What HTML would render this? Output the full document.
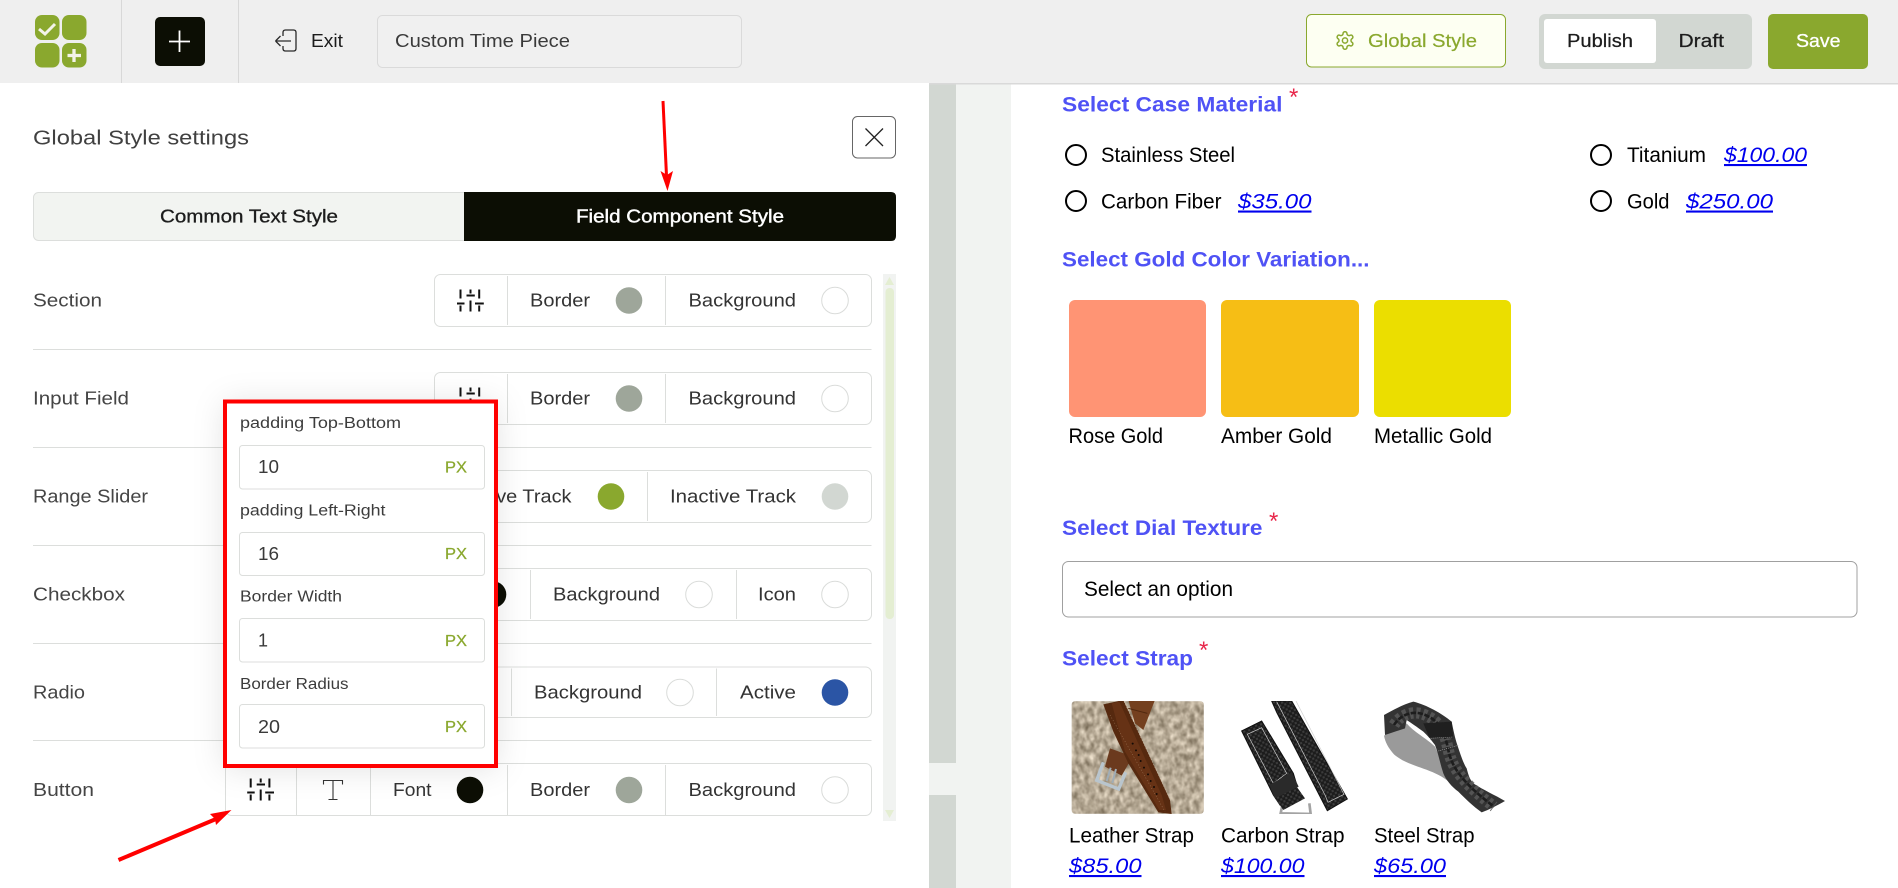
<!DOCTYPE html>
<html lang="en"><head><meta charset="utf-8"><title>Custom Time Piece - Global Style settings</title>
<style>
html,body{margin:0;padding:0;background:#fff;width:1898px;height:888px;overflow:hidden}
svg{display:block}
text{font-family:"Liberation Sans",sans-serif;white-space:pre}
.h{font-size:18px;fill:#1c1c1c}
.l{font-size:18px;fill:#454545}
.c{font-size:18px;fill:#333}
.p{font-size:15.5px;fill:#3c3c3c}
.v{font-size:18px;fill:#3a3a3a}
.x{font-size:16px;fill:#8aa82e;font-weight:400;stroke:#8aa82e;stroke-width:.25}
.q{font-size:21px;font-weight:700;fill:#4f52f5}
.f{font-size:21px;fill:#000}
.m{font-size:21px;fill:#0000ee;font-style:italic;text-decoration:underline}
.s{font-size:24px;fill:#e8274b}
.ctl{fill:#fff;stroke:#dcdedc;stroke-width:1}
.dv{stroke:#dcdedc;stroke-width:1}
.hr{stroke:#dcdedc;stroke-width:1}
.in{fill:#fff;stroke:#dcdedc;stroke-width:1}
.em{fill:#fff;stroke:#dadcda;stroke-width:1}
</style></head><body>
<svg xmlns="http://www.w3.org/2000/svg" width="1898" height="888" viewBox="0 0 1898 888">
<defs>
<g id="sl" fill="none" stroke="#111" stroke-width="2">
<path d="M-10 -11V-2M-10 5V11M0 -11V-7M0 0V11M8.700 -11V-2M8.700 5V11"/>
<path d="M-13.500 3H-6M-4 -5H4.300M4.500 3H13.300"/>
</g>
<filter id="nz" x="0" y="0" width="100%" height="100%" color-interpolation-filters="sRGB">
<feTurbulence type="fractalNoise" baseFrequency=".2 .13" numOctaves="3" seed="7"/>
<feColorMatrix values=".65 0 0 0 .385  .65 0 0 0 .335  .65 0 0 0 .255  0 0 0 0 1"/>
<feGaussianBlur stdDeviation=".5"/>
</filter>
<filter id="shd" x="-30%" y="-20%" width="160%" height="140%"><feDropShadow dx="0" dy="2" stdDeviation="16" flood-color="#000" flood-opacity=".12"/></filter>
<clipPath id="clipL"><rect x="1071.500" y="701" width="132.500" height="113" rx="4"/></clipPath>
<clipPath id="clipC"><rect x="1225" y="701" width="140" height="113"/></clipPath>
<pattern id="cb" width="11" height="11" patternUnits="userSpaceOnUse" patternTransform="rotate(30)">
<rect width="11" height="11" fill="#1c1c1c"/><path d="M5.500 1L10 5.500 5.500 10 1 5.500Z" fill="#3c3c3c"/>
</pattern>
</defs>

<!-- canvas / right background -->
<rect x="929" y="83" width="27" height="805" fill="#d2d7d2"/>
<rect x="929" y="763" width="27" height="32" fill="#f1f3f1"/>
<rect x="956" y="83" width="55" height="805" fill="#f1f3f1"/>

<!-- header -->
<rect width="1898" height="83" fill="#efefef"/>
<rect x="929" y="83" width="969" height="1.500" fill="#d9d9d9"/>
<rect x="121" y="0" width="1" height="83" fill="#d8d8d8"/>
<rect x="238" y="0" width="1" height="83" fill="#d8d8d8"/>
<g fill="#8aa82e"><rect x="35" y="15" width="24.500" height="25" rx="7"/><rect x="62" y="15" width="24.500" height="25" rx="7"/><rect x="35" y="43" width="24.500" height="24.500" rx="7"/><rect x="62" y="43" width="24.500" height="24.500" rx="7"/></g>
<path d="M39 29L45 34 55 24" fill="none" stroke="#f3f3e8" stroke-width="3"/>
<path d="M74 49V62M67.500 55.500H81" fill="none" stroke="#f3f3e8" stroke-width="3.300"/>
<rect x="155" y="17" width="50" height="49" rx="5" fill="#0c0e04"/>
<path d="M179.500 30.500V52M169 41.500H190" stroke="#fff" stroke-width="1.800" fill="none"/>
<path d="M283 36V32.500Q283 30 285.500 30H293.500Q296 30 296 32.500V48.500Q296 51 293.500 51H285.500Q283 51 283 48.500V46M275.500 41H291M275.500 41L280.500 36M275.500 41L280.500 46" fill="none" stroke="#2a2a2a" stroke-width="1.300"/>
<text class="h" x="311" y="47" textLength="32" lengthAdjust="spacingAndGlyphs">Exit</text>
<rect x="377.500" y="15.500" width="364" height="52" rx="5" fill="#f0f0f0" stroke="#dadada" stroke-width="1"/>
<text class="h" x="395" y="47" textLength="175" lengthAdjust="spacingAndGlyphs" style="fill:#3a3a3a">Custom Time Piece</text>

<rect x="1306.500" y="14.500" width="199" height="52.500" rx="5" fill="#fdfff2" stroke="#8aa82e" stroke-width="1"/>
<g transform="translate(1334.500,30) scale(.875)" fill="none" stroke="#8aa82e" stroke-width="1.700"><path d="M12.220 2h-.44a2 2 0 0 0-2 2v.18a2 2 0 0 1-1 1.730l-.43.25a2 2 0 0 1-2 0l-.15-.08a2 2 0 0 0-2.730.73l-.22.38a2 2 0 0 0 .73 2.730l.15.1a2 2 0 0 1 1 1.720v.51a2 2 0 0 1-1 1.740l-.15.09a2 2 0 0 0-.73 2.730l.22.38a2 2 0 0 0 2.730.73l.15-.08a2 2 0 0 1 2 0l.43.25a2 2 0 0 1 1 1.730V20a2 2 0 0 0 2 2h.44a2 2 0 0 0 2-2v-.18a2 2 0 0 1 1-1.730l.43-.25a2 2 0 0 1 2 0l.15.08a2 2 0 0 0 2.730-.73l.22-.39a2 2 0 0 0-.73-2.730l-.15-.08a2 2 0 0 1-1-1.740v-.5a2 2 0 0 1 1-1.740l.15-.09a2 2 0 0 0 .73-2.730l-.22-.38a2 2 0 0 0-2.730-.73l-.15.08a2 2 0 0 1-2 0l-.43-.25a2 2 0 0 1-1-1.730V4a2 2 0 0 0-2-2z"/><circle cx="12" cy="12" r="3"/></g>
<text class="h" x="1368" y="47" textLength="109" lengthAdjust="spacingAndGlyphs" style="fill:#8aa82e;stroke:#8aa82e;stroke-width:.2">Global Style</text>
<rect x="1539" y="14" width="213" height="55" rx="6" fill="#d2d7d2"/>
<rect x="1544" y="19" width="112" height="44" rx="3" fill="#fff"/>
<text class="h" x="1567" y="47" textLength="66" lengthAdjust="spacingAndGlyphs" style="stroke:#1c1c1c;stroke-width:.25">Publish</text>
<text class="h" x="1678.500" y="47" textLength="45.500" lengthAdjust="spacingAndGlyphs" style="stroke:#1c1c1c;stroke-width:.25">Draft</text>
<rect x="1768" y="14" width="100" height="55" rx="5" fill="#8aa82e"/>
<text class="h" x="1796" y="47" textLength="44.500" lengthAdjust="spacingAndGlyphs" style="fill:#fff;stroke:#fff;stroke-width:.3">Save</text>

<!-- left panel -->
<text x="33" y="144.500" textLength="216" lengthAdjust="spacingAndGlyphs" style="font-size:20.500px;fill:#404040">Global Style settings</text>
<rect x="852.500" y="116.500" width="43" height="41.500" rx="5" fill="#fff" stroke="#666" stroke-width="1"/>
<path d="M865.500 128.500L883 146M883 128.500L865.500 146" stroke="#222" stroke-width="1.300" fill="none"/>
<rect x="33.500" y="192.500" width="862" height="48" rx="5" fill="#f2f4f1" stroke="#dcdedc" stroke-width="1"/>
<path d="M464 192H891Q896 192 896 197V236Q896 241 891 241H464Z" fill="#0c0e04"/>
<text class="h" x="160" y="222.500" textLength="178" lengthAdjust="spacingAndGlyphs" style="stroke:#1c1c1c;stroke-width:.3">Common Text Style</text>
<text class="h" x="576" y="222.500" textLength="208" lengthAdjust="spacingAndGlyphs" style="fill:#fff;stroke:#fff;stroke-width:.4">Field Component Style</text>

<!-- scrollbar -->
<rect x="883" y="274" width="13" height="547" fill="#f1f3f1"/>
<rect x="885.500" y="288" width="8.500" height="331" rx="4" fill="#e4eed2"/>
<path d="M889.500 277L894 285H885Z" fill="#e4eed2"/><path d="M889.500 818L894 810H885Z" fill="#e4eed2"/>

<!-- row labels -->
<text class="l" x="33" y="306.500" textLength="69" lengthAdjust="spacingAndGlyphs">Section</text>
<text class="l" x="33" y="404.500" textLength="96" lengthAdjust="spacingAndGlyphs">Input Field</text>
<text class="l" x="33" y="502.500" textLength="115" lengthAdjust="spacingAndGlyphs">Range Slider</text>
<text class="l" x="33" y="600.500" textLength="92" lengthAdjust="spacingAndGlyphs">Checkbox</text>
<text class="l" x="33" y="698.500" textLength="52" lengthAdjust="spacingAndGlyphs">Radio</text>
<text class="l" x="33" y="796" textLength="61" lengthAdjust="spacingAndGlyphs">Button</text>
<g class="hr"><path d="M33 349.500H871.500M33 447.500H871.500M33 545.500H871.500M33 643.500H871.500M33 740.500H871.500"/></g>

<!-- row 1 -->
<rect class="ctl" x="434.500" y="274.500" width="437" height="52" rx="6"/>
<path class="dv" d="M507.500 276V325M665.500 276V325"/>
<use href="#sl" x="470.500" y="300.500"/>
<text class="c" x="530" y="306.500" textLength="60" lengthAdjust="spacingAndGlyphs">Border</text>
<circle cx="629" cy="300.500" r="13.300" fill="#9ea69a"/>
<text class="c" x="688.500" y="306.500" textLength="107.500" lengthAdjust="spacingAndGlyphs">Background</text>
<circle class="em" cx="835" cy="300.500" r="13.300"/>

<!-- row 2 -->
<rect class="ctl" x="434.500" y="372.500" width="437" height="52" rx="6"/>
<path class="dv" d="M507.500 374V423M665.500 374V423"/>
<use href="#sl" x="470.500" y="398.500"/>
<text class="c" x="530" y="404.500" textLength="60" lengthAdjust="spacingAndGlyphs">Border</text>
<circle cx="629" cy="398.500" r="13.300" fill="#9ea69a"/>
<text class="c" x="688.500" y="404.500" textLength="107.500" lengthAdjust="spacingAndGlyphs">Background</text>
<circle class="em" cx="835" cy="398.500" r="13.300"/>

<!-- row 3 -->
<rect class="ctl" x="400" y="470.500" width="471.500" height="52" rx="6"/>
<path class="dv" d="M647.500 472V521"/>
<text class="c" x="463" y="502.500" textLength="108.500" lengthAdjust="spacingAndGlyphs">Active Track</text>
<circle cx="611" cy="496.500" r="13.300" fill="#8aa82e"/>
<text class="c" x="670" y="502.500" textLength="126" lengthAdjust="spacingAndGlyphs">Inactive Track</text>
<circle cx="835" cy="496.500" r="13.300" fill="#d2d7d2"/>

<!-- row 4 -->
<rect class="ctl" x="400" y="568.500" width="471.500" height="52" rx="6"/>
<path class="dv" d="M530.500 570V619M736.500 570V619"/>
<circle cx="493" cy="594.500" r="13.300" fill="#0c0e04"/>
<text class="c" x="553" y="600.500" textLength="107" lengthAdjust="spacingAndGlyphs">Background</text>
<circle class="em" cx="699" cy="594.500" r="13.300"/>
<text class="c" x="758" y="600.500" textLength="38" lengthAdjust="spacingAndGlyphs">Icon</text>
<circle class="em" cx="835" cy="594.500" r="13.300"/>

<!-- row 5 -->
<rect class="ctl" x="400" y="667" width="471.500" height="50.500" rx="6"/>
<path class="dv" d="M511.500 668.500V716M716.500 668.500V716"/>
<text class="c" x="534" y="698.500" textLength="108" lengthAdjust="spacingAndGlyphs">Background</text>
<circle class="em" cx="680" cy="692.500" r="13.300"/>
<text class="c" x="740" y="698.500" textLength="56" lengthAdjust="spacingAndGlyphs">Active</text>
<circle cx="835" cy="692.500" r="13.300" fill="#2b55a5"/>

<!-- row 6 -->
<rect class="ctl" x="225.500" y="763.500" width="646" height="52" rx="6"/>
<path class="dv" d="M296.500 765V815M370.500 765V815M507.500 765V815M665.500 765V815"/>
<use href="#sl" x="260.700" y="789.500"/>
<path d="M323.500 784.500V780.500H342.500V784.500M333 780.500V799.500M328.500 799.500H337.500" fill="none" stroke="#333" stroke-width="1.100"/>
<text class="c" x="393" y="796" textLength="38.500" lengthAdjust="spacingAndGlyphs">Font</text>
<circle cx="470" cy="790" r="13.300" fill="#0c0e04"/>
<text class="c" x="530" y="796" textLength="60" lengthAdjust="spacingAndGlyphs">Border</text>
<circle cx="629" cy="790" r="13.300" fill="#9ea69a"/>
<text class="c" x="688.500" y="796" textLength="107.500" lengthAdjust="spacingAndGlyphs">Background</text>
<circle class="em" cx="835" cy="790" r="13.300"/>

<!-- popup -->
<rect x="225" y="401.500" width="271" height="364.500" fill="#fff" filter="url(#shd)"/>
<rect x="225" y="401.500" width="271" height="364.500" fill="#fff" stroke="#ff0000" stroke-width="4"/>
<text class="p" x="240" y="428" textLength="161" lengthAdjust="spacingAndGlyphs">padding Top-Bottom</text>
<rect class="in" x="239.500" y="445.500" width="245" height="43.500" rx="3"/>
<text class="v" x="258" y="473" textLength="21" lengthAdjust="spacingAndGlyphs">10</text>
<text class="x" x="445" y="472.500" textLength="22" lengthAdjust="spacingAndGlyphs">PX</text>
<text class="p" x="240" y="515.500" textLength="145.500" lengthAdjust="spacingAndGlyphs">padding Left-Right</text>
<rect class="in" x="239.500" y="532.500" width="245" height="43" rx="3"/>
<text class="v" x="258" y="560" textLength="21" lengthAdjust="spacingAndGlyphs">16</text>
<text class="x" x="445" y="559" textLength="22" lengthAdjust="spacingAndGlyphs">PX</text>
<text class="p" x="240" y="601.500" textLength="102" lengthAdjust="spacingAndGlyphs">Border Width</text>
<rect class="in" x="239.500" y="618.500" width="245" height="43.500" rx="3"/>
<text class="v" x="258" y="646.500">1</text>
<text class="x" x="445" y="646" textLength="22" lengthAdjust="spacingAndGlyphs">PX</text>
<text class="p" x="240" y="689" textLength="108.500" lengthAdjust="spacingAndGlyphs">Border Radius</text>
<rect class="in" x="239.500" y="704.500" width="245" height="43.500" rx="3"/>
<text class="v" x="258" y="733" textLength="22" lengthAdjust="spacingAndGlyphs">20</text>
<text class="x" x="445" y="732" textLength="22" lengthAdjust="spacingAndGlyphs">PX</text>

<!-- annotation arrows -->
<path d="M663 101L666.500 176" stroke="#ff0000" stroke-width="3" fill="none"/>
<path d="M660.500 171L667 175 673 171 667.500 191Z" fill="#ff0000"/>
<path d="M118.500 860L216 819" stroke="#ff0000" stroke-width="4" fill="none"/>
<path d="M231.500 810L210 814 215 819 216 825Z" fill="#ff0000"/>

<!-- form -->
<text class="q" x="1062" y="111.500" textLength="220.500" lengthAdjust="spacingAndGlyphs">Select Case Material</text>
<text class="s" x="1289" y="105">*</text>
<g fill="none" stroke="#000" stroke-width="2"><circle cx="1076" cy="155" r="10"/><circle cx="1076" cy="201" r="10"/><circle cx="1601" cy="155" r="10"/><circle cx="1601" cy="201" r="10"/></g>
<text class="f" x="1101" y="162" textLength="134" lengthAdjust="spacingAndGlyphs">Stainless Steel</text>
<text class="f" x="1627" y="162" textLength="79" lengthAdjust="spacingAndGlyphs">Titanium</text>
<text class="m" x="1724" y="162" textLength="83" lengthAdjust="spacingAndGlyphs">$100.00</text>
<text class="f" x="1101" y="208.500" textLength="120.500" lengthAdjust="spacingAndGlyphs">Carbon Fiber</text>
<text class="m" x="1238" y="208.500" textLength="73.500" lengthAdjust="spacingAndGlyphs">$35.00</text>
<text class="f" x="1627" y="208.500" textLength="42.500" lengthAdjust="spacingAndGlyphs">Gold</text>
<text class="m" x="1686" y="208.500" textLength="87" lengthAdjust="spacingAndGlyphs">$250.00</text>
<text class="q" x="1062" y="266.500" textLength="307.500" lengthAdjust="spacingAndGlyphs">Select Gold Color Variation...</text>

<rect x="1069" y="300" width="137" height="117" rx="6" fill="#ff9474"/>
<rect x="1221" y="300" width="138" height="117" rx="6" fill="#f6be15"/>
<rect x="1374" y="300" width="137" height="117" rx="6" fill="#ebde00"/>
<text class="f" x="1068.500" y="443" textLength="94.500" lengthAdjust="spacingAndGlyphs">Rose Gold</text>
<text class="f" x="1221" y="443" textLength="111" lengthAdjust="spacingAndGlyphs">Amber Gold</text>
<text class="f" x="1374" y="443" textLength="118" lengthAdjust="spacingAndGlyphs">Metallic Gold</text>

<text class="q" x="1062" y="535" textLength="200.500" lengthAdjust="spacingAndGlyphs">Select Dial Texture</text>
<text class="s" x="1269" y="529">*</text>
<rect x="1062.500" y="561.500" width="794.500" height="55.500" rx="6" fill="#fff" stroke="#a0a0a0" stroke-width="1"/>
<text class="f" x="1084" y="596" textLength="149" lengthAdjust="spacingAndGlyphs">Select an option</text>

<text class="q" x="1062" y="665.500" textLength="131" lengthAdjust="spacingAndGlyphs">Select Strap</text>
<text class="s" x="1199" y="658">*</text>

<!-- leather strap image -->
<g clip-path="url(#clipL)">
<rect x="1071.500" y="701" width="132.500" height="113" filter="url(#nz)"/>
<g transform="translate(1060,695) scale(.33333)">
<path d="M205 15H285L250 105 225 85Z" fill="#74401f"/>
<path d="M205 40L262 55" stroke="#52290f" stroke-width="3"/>
<path d="M150 160L200 178 212 195 185 242 135 215Z" fill="#6b3a1e"/>
<path d="M130 28L190 15 330 315 335 357 295 352 205 205 160 110Z" fill="#56290f"/>
<path d="M155 25L178 20 305 300 318 345 298 345 195 170Z" fill="#6a3517" opacity=".8"/>
<path d="M192 20L332 318" stroke="#c9b9a3" stroke-width="1.500" stroke-dasharray="4 5" fill="none"/>
<path d="M150 60L315 350" stroke="#b79878" stroke-width="1.300" stroke-dasharray="3 6" fill="none"/>
<g fill="#140b06"><circle cx="218" cy="146" r="3"/><circle cx="228" cy="166" r="3"/><circle cx="236" cy="180" r="3"/><circle cx="242" cy="198" r="3"/><circle cx="252" cy="218" r="3"/><circle cx="264" cy="238" r="3"/><circle cx="272" cy="258" r="3"/><circle cx="282" cy="276" r="3"/><circle cx="290" cy="297" r="3"/></g>
<path d="M130 202L110 256 176 282 197 232" fill="none" stroke="#b9c5cd" stroke-width="10"/>
<path d="M152 218L140 258M168 222L157 264" stroke="#a0adb6" stroke-width="6" fill="none"/>
</g></g>

<!-- carbon strap image -->
<g clip-path="url(#clipC)"><g transform="translate(1060,695) scale(.33333)">
<path d="M668 325L662 355 752 357 748 325" fill="none" stroke="#a3a3a3" stroke-width="8"/>
<path d="M635 18H695L862 312 802 347 650 52Z" fill="url(#cb)" stroke="#0f0f0f" stroke-width="3"/>
<path d="M650 20L795 300 804 322 852 298 708 18" fill="none" stroke="#d0d0d0" stroke-width="2"/>
<path d="M545 108L605 78 700 235 712 275 660 330 640 300Z" fill="url(#cb)" stroke="#0f0f0f" stroke-width="3"/>
<path d="M562 118L605 98 680 235 640 265Z" fill="none" stroke="#d0d0d0" stroke-width="2"/>
<path d="M628 270L695 232 716 275 645 310Z" fill="#2a2a2a"/>
<path d="M645 310L712 278 735 310 670 345Z" fill="url(#cb)"/>
</g></g>

<!-- steel strap image -->
<g transform="translate(1370,695) scale(.33333)">
<path d="M42 122C60 112 90 100 110 85C130 110 170 130 195 155L245 268C195 218 120 220 72 178 55 160 45 140 42 122Z" fill="#9a9a9a"/>
<path d="M42 60C70 45 100 28 130 20C170 30 215 55 245 80 250 105 255 130 262 150 272 180 280 205 290 220 295 240 300 255 310 265 340 285 375 300 405 318 380 332 358 344 335 352 310 335 285 310 265 290 245 275 228 255 220 235 210 205 205 175 195 150 180 130 170 120 160 110 140 95 125 85 110 75L105 100 45 120Z" fill="#333"/>
<path d="M72 90C90 60 130 42 170 62 215 82 225 120 235 165 245 215 275 262 372 335" fill="none" stroke="#5a5a5a" stroke-width="34" stroke-dasharray="11 9" opacity=".85"/>
<path d="M72 90C90 60 130 42 170 62 215 82 225 120 235 165 245 215 275 262 372 335" fill="none" stroke="#1d1d1d" stroke-width="8" stroke-dasharray="16 5"/>
<path d="M160 85L245 80 250 130 178 128Z" fill="#1f1f1f"/>
<path d="M178 130L250 126M205 168L268 150" stroke="#d5d5d5" stroke-width="1.500" stroke-dasharray="3 3" fill="none"/>
</g>

<text class="f" x="1069" y="842.500" textLength="125" lengthAdjust="spacingAndGlyphs">Leather Strap</text>
<text class="f" x="1221" y="842.500" textLength="123.500" lengthAdjust="spacingAndGlyphs">Carbon Strap</text>
<text class="f" x="1374" y="842.500" textLength="100.500" lengthAdjust="spacingAndGlyphs">Steel Strap</text>
<text class="m" x="1069" y="873" textLength="72.500" lengthAdjust="spacingAndGlyphs">$85.00</text>
<text class="m" x="1221" y="873" textLength="83.500" lengthAdjust="spacingAndGlyphs">$100.00</text>
<text class="m" x="1374" y="873" textLength="72" lengthAdjust="spacingAndGlyphs">$65.00</text>
</svg>
</body></html>
